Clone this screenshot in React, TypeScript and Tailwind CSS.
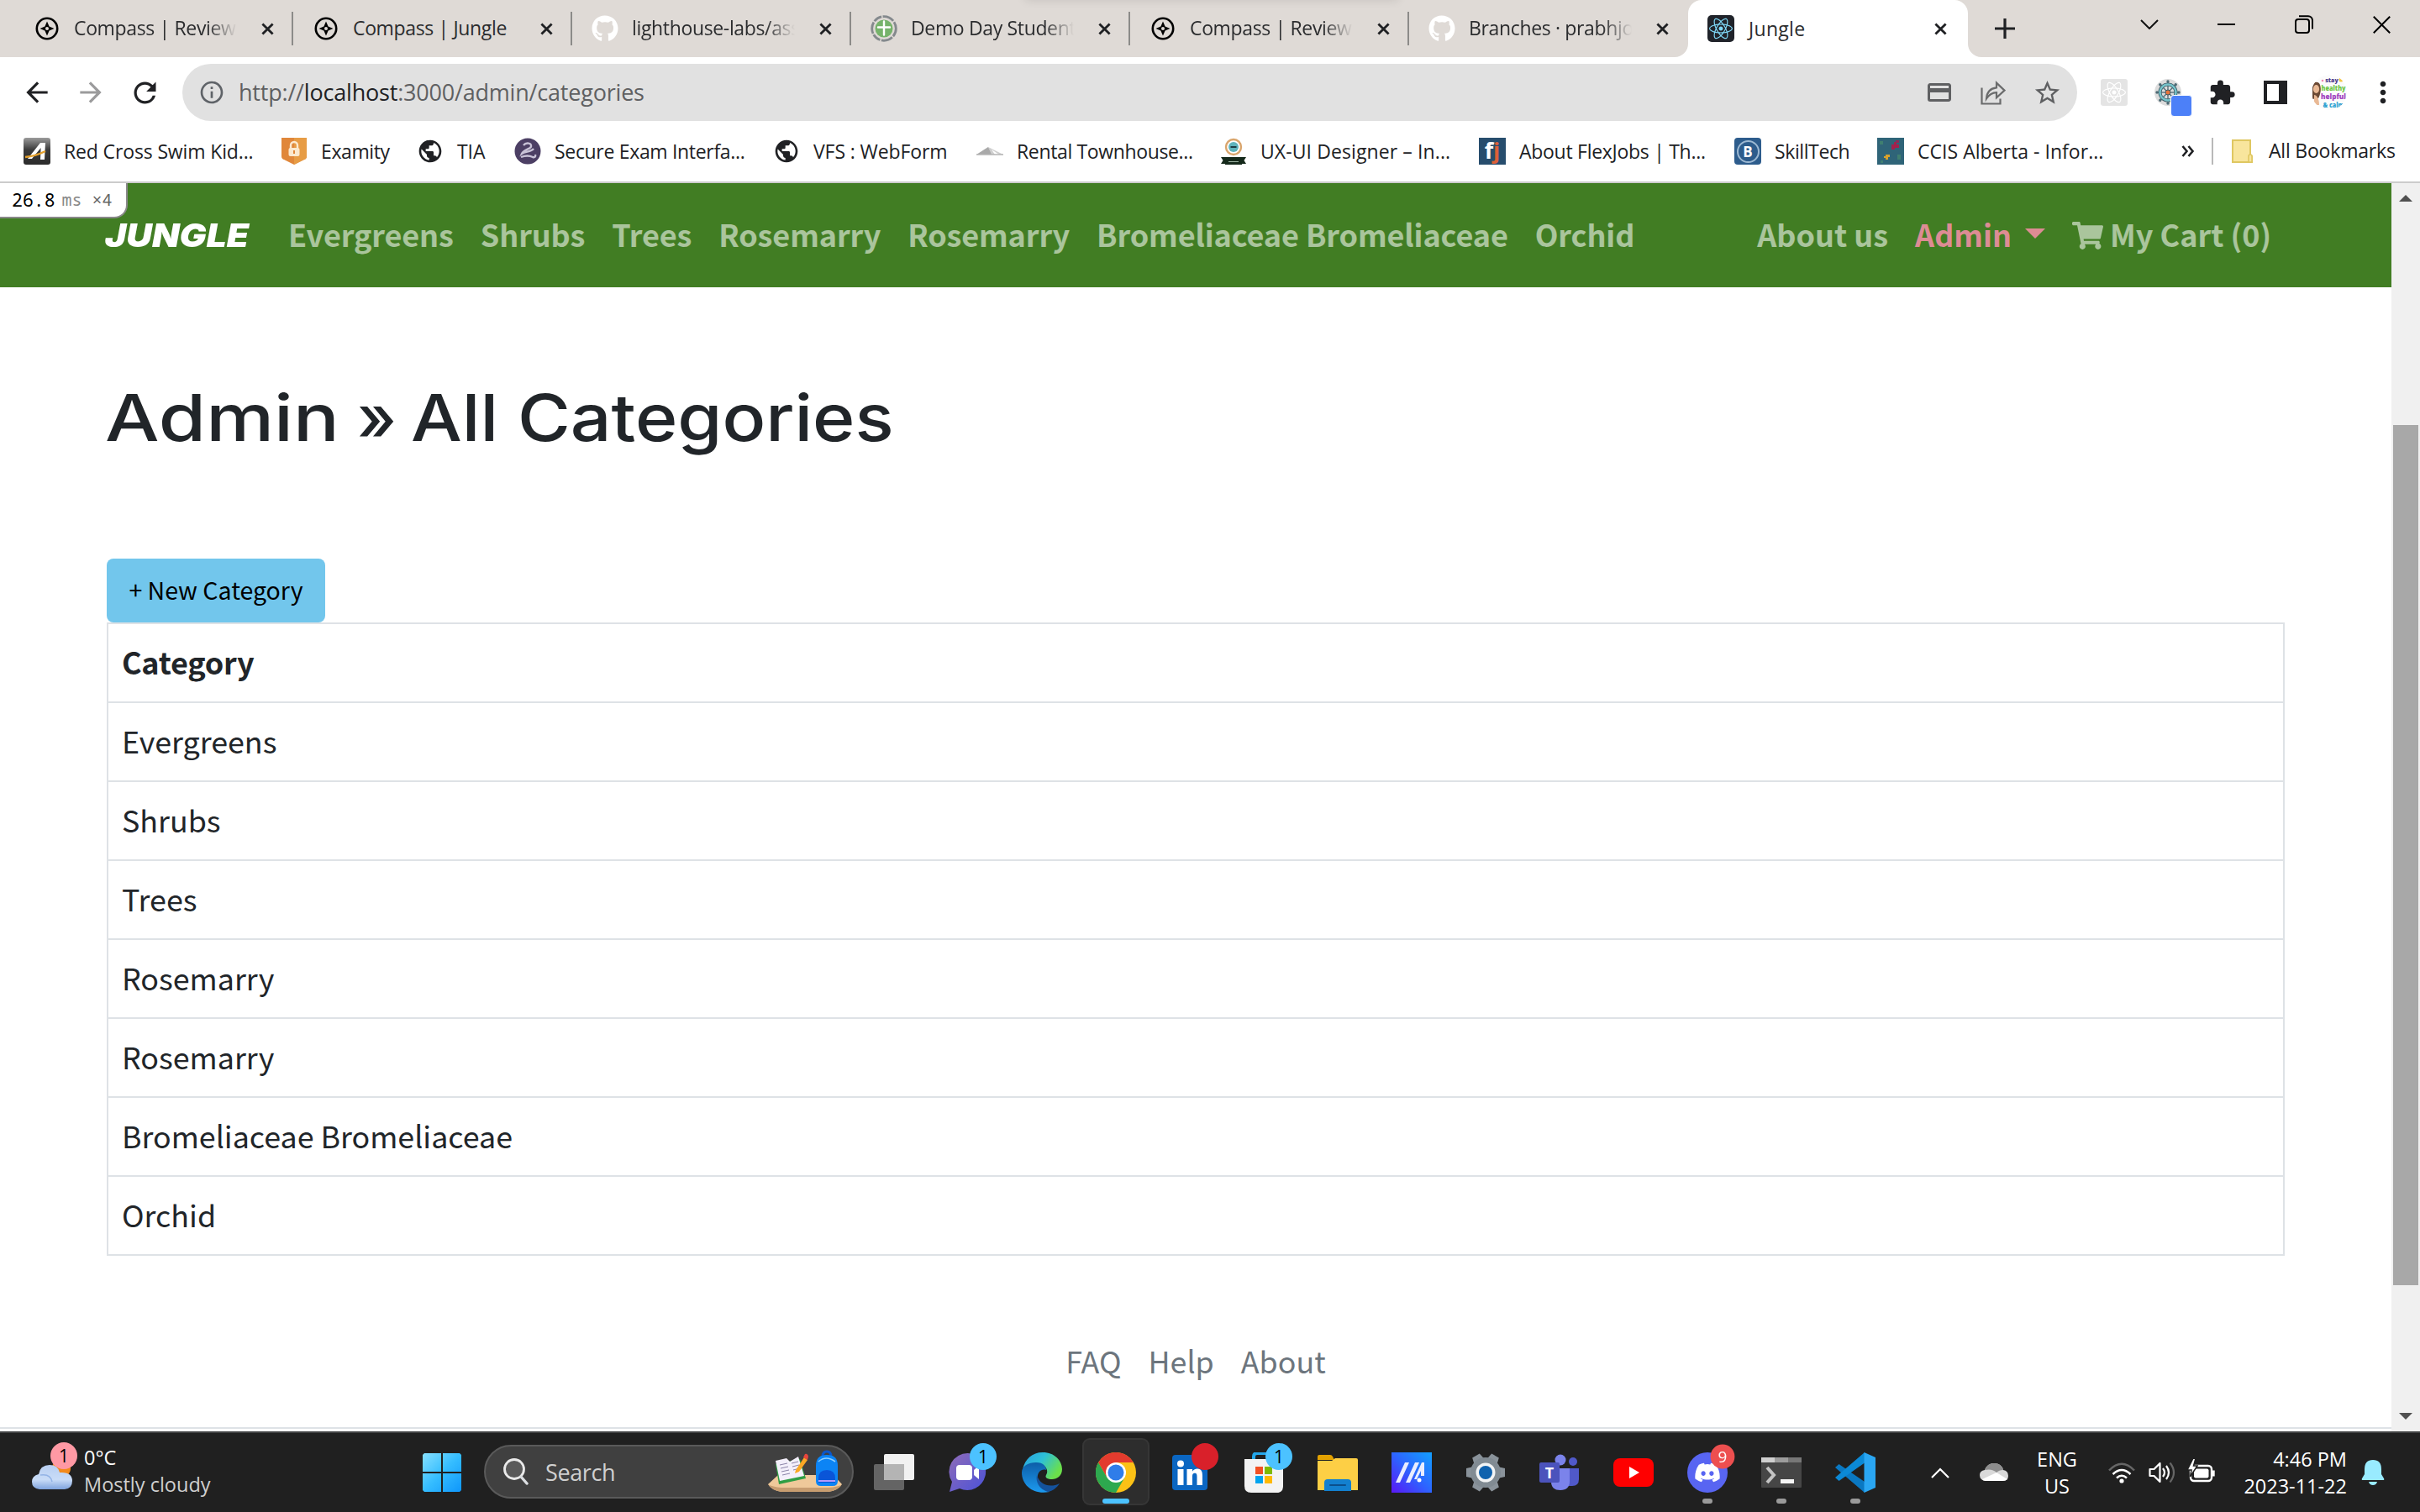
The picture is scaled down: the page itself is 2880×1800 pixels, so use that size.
import type { ReactNode } from 'react';
import { FaReact, FaGithub, FaShoppingCart, FaDiscord } from 'react-icons/fa';
import { MdArrowBack, MdArrowForward, MdRefresh, MdInfoOutline, MdStarBorder, MdExtension, MdMoreVert, MdPublic } from 'react-icons/md';

/* ---------- small shared drawings ---------- */

function Cross({ size = 15, stroke = 3 }: { size?: number; stroke?: number }) {
  return (
    <svg width={size} height={size} viewBox="0 0 16 16" className="shrink-0">
      <path d="M1.5 1.5l13 13M14.5 1.5l-13 13" stroke="#202124" strokeWidth={stroke} />
    </svg>
  );
}

function CompassIcon() {
  return (
    <svg width="28" height="28" viewBox="0 0 28 28">
      <circle cx="14" cy="14" r="12.2" fill="none" stroke="#000" strokeWidth="2.6" />
      <path d="M14 5.500l2.600 5.900 5.900 2.600-5.900 2.600L14 22.500l-2.600-5.900L5.500 14l5.900-2.600z" fill="#000" />
      <circle cx="14" cy="14" r="2" fill="#dfdad6" />
    </svg>
  );
}

function DemoDayIcon() {
  return (
    <svg width="32" height="32" viewBox="0 0 32 32">
      <circle cx="16" cy="16" r="14.300" fill="none" stroke="#84898d" strokeWidth="2.800" strokeDasharray="10 1.500 14 1.500" />
      <circle cx="16" cy="16" r="10.500" fill="#76b36b" />
      <path d="M16 7.500v16M9 14.500h14" stroke="#fff" strokeWidth="2.400" strokeLinecap="round" />
    </svg>
  );
}

function ReactTile({ faded }: { faded?: boolean }) {
  return (
    <div className={faded ? 'flex size-8 items-center justify-center rounded-[3px] bg-[#e4e4e4]' : 'flex size-8 items-center justify-center rounded-[5px] bg-[#20232a]'}>
      <FaReact className={faded ? 'size-7 text-white' : 'size-7 text-[#7fd8f7]'} />
    </div>
  );
}

/* ---------- tab strip ---------- */

const tabs: { title: string; icon: ReactNode }[] = [
  { title: 'Compass | Review A', icon: <CompassIcon /> },
  { title: 'Compass | Jungle', icon: <CompassIcon /> },
  { title: 'lighthouse-labs/assi', icon: <FaGithub className="size-8 text-white" /> },
  { title: 'Demo Day Students', icon: <DemoDayIcon /> },
  { title: 'Compass | Review A', icon: <CompassIcon /> },
  { title: 'Branches · prabhjot', icon: <FaGithub className="size-8 text-white" /> },
];

function TabStrip() {
  return (
    <div className="relative flex h-[68px] shrink-0 bg-[#dfdad6] pl-[17px] text-[23px] text-[#2b2c2e]">
      <div className="absolute left-[1220px] top-[-12px] h-2.5 w-[444px] shadow-[0_2px_12px_rgba(0,0,0,0.12)]" />
      {tabs.map((t, i) => (
        <div key={i} className="flex w-[332px] shrink-0 items-center">
          <div className="ml-[23px] flex size-8 shrink-0 items-center justify-center">{t.icon}</div>
          <div
            className={
              t.title === 'Compass | Jungle'
                ? 'ml-4 h-10 w-[194px] whitespace-nowrap leading-[38px] tracking-[-0.35px]'
                : 'ml-4 h-10 w-[194px] overflow-hidden whitespace-nowrap leading-[38px] tracking-[-0.35px] [mask-image:linear-gradient(to_right,black_82%,transparent_100%)]'
            }
          >
            {t.title}
          </div>
          <div className="ml-[29px] flex grow items-center justify-between">
            <Cross />
            {i < 5 && <div className="h-10 w-0.5 bg-[#8c8b89]" />}
          </div>
        </div>
      ))}
      <div className="relative flex w-[333px] shrink-0 items-center rounded-t-[16px] bg-white">
        <svg className="absolute bottom-0 left-[-16px]" width="16" height="16" viewBox="0 0 16 16"><path d="M16 0v16H0A16 16 0 0 0 16 0z" fill="#fff" /></svg>
        <svg className="absolute bottom-0 right-[-16px]" width="16" height="16" viewBox="0 0 16 16"><path d="M0 0v16h16A16 16 0 0 1 0 0z" fill="#fff" /></svg>
        <div className="ml-[23px]"><ReactTile /></div>
        <div className="ml-[17px] w-[221px] leading-[38px] tracking-[0.3px]">Jungle</div>
        <Cross />
      </div>
      <div className="ml-[32px] flex items-center">
        <svg width="24" height="24" viewBox="0 0 24 24"><path d="M12 0v24M0 12h24" stroke="#202124" strokeWidth="3.200" /></svg>
      </div>
      <div className="ml-auto flex h-[58px] items-center">
        <svg width="22" height="12" viewBox="0 0 22 12" className="mr-[70px]"><path d="M1 1l10 10L21 1" fill="none" stroke="#111" strokeWidth="2" /></svg>
        <div className="mr-[71px] h-0.5 w-[21px] bg-black" />
        <svg width="22" height="22" viewBox="0 0 22 22" className="mr-[71px]">
          <rect x="1" y="5" width="16" height="16" rx="3" fill="none" stroke="#000" strokeWidth="2" />
          <path d="M5 1.200h11a5 5 0 0 1 5 5V16.500" fill="none" stroke="#000" strokeWidth="2" />
        </svg>
        <svg width="21" height="21" viewBox="0 0 21 21" className="mr-[35px]"><path d="M.8.8l19.400 19.400M20.200.8L.8 20.200" stroke="#000" strokeWidth="2" /></svg>
      </div>
    </div>
  );
}

/* ---------- address bar ---------- */

function Cell({ children }: { children: ReactNode }) {
  return <div className="relative flex h-16 w-16 shrink-0 items-center justify-center">{children}</div>;
}

function WheelIcon() {
  const angles = [0, 45, 90, 135, 180, 225, 270, 315];
  return (
    <svg width="32" height="32" viewBox="0 0 32 32">
      <circle cx="16" cy="16" r="16" fill="#dcdcdc" />
      {angles.map((a) => (
        <g key={a} transform={`rotate(${a} 16 16)`}>
          <path d="M16 16V4" stroke="#4d6a74" strokeWidth="1.300" />
          <circle cx="16" cy="3" r="1.700" fill="#4d6a74" />
        </g>
      ))}
      <circle cx="16" cy="16" r="9.500" fill="none" stroke="#3f5c66" strokeWidth="4" />
      <circle cx="16" cy="16" r="9.500" fill="none" stroke="#76c3ca" strokeWidth="2.400" />
      <circle cx="16" cy="16" r="3" fill="#e8743b" stroke="#3f5c66" />
    </svg>
  );
}

function ProfilePicture() {
  return (
    <svg width="42" height="42" viewBox="0 0 42 42" className="rounded-full">
      <circle cx="21" cy="21" r="21" fill="#fbfbfb" />
      <path d="M1 14c1-6 7-7 9-2 2 6 0 12-2 16l-7 1z" fill="#6b4a35" />
      <ellipse cx="5.500" cy="17" rx="3.600" ry="5" fill="#e9b995" />
      <path d="M3 24c3 0 6 4 6 12H3z" fill="#e9b995" />
      <circle cx="35" cy="6" r="2.500" fill="#f4c542" />
      <circle cx="13" cy="7" r="1.300" fill="#f08ab0" />
      <g fontFamily="Open Sans, sans-serif" fontWeight="800" textAnchor="middle">
        <text x="24" y="9" fontSize="7" fill="#4a3a8a">stay</text>
        <text x="26" y="19" fontSize="9" textLength="29" lengthAdjust="spacingAndGlyphs" fill="#6cc644">healthy</text>
        <text x="26" y="29" fontSize="9" textLength="30" lengthAdjust="spacingAndGlyphs" fill="#a044c0">helpful</text>
        <text x="26" y="39" fontSize="9" textLength="25" lengthAdjust="spacingAndGlyphs" fill="#2a9fd0">&amp; calm</text>
      </g>
    </svg>
  );
}

function AddressBar() {
  return (
    <div className="flex h-[84px] shrink-0 items-center bg-white">
      <div className="ml-[25px] flex w-[192px] items-center">
        <MdArrowBack className="size-[38px] text-[#202124]" />
        <MdArrowForward className="ml-[26px] size-[38px] text-[#9b9b9c]" />
        <MdRefresh className="ml-[26px] size-[39px] text-[#202124]" />
      </div>
      <div className="flex h-[68px] w-[2255px] items-center rounded-full bg-[#e1e1e1] pl-[19px] pr-1">
        <MdInfoOutline className="size-[32px] text-[#5f6368]" />
        <div className="ml-[16px] text-[27px] tracking-[-0.2px] text-[#5f6062]">http://<span className="text-[#202124]">localhost</span>:3000/admin/categories</div>
        <div className="ml-auto flex">
          <Cell>
            <svg width="28" height="22" viewBox="0 0 28 22"><path d="M3 1.500h22a1.500 1.500 0 0 1 1.500 1.500v16a1.500 1.500 0 0 1-1.500 1.500H3A1.500 1.500 0 0 1 1.500 19V3A1.500 1.500 0 0 1 3 1.500z" fill="none" stroke="#5f6062" strokeWidth="3" /><path d="M1 8.500h26" stroke="#5f6062" strokeWidth="5" /></svg>
          </Cell>
          <Cell>
            <svg width="30" height="29" viewBox="0 0 30 29" fill="none" stroke="#6a6b6c" strokeWidth="2.200"><path d="M1.500 8.500v19h22v-6" /><path d="M7 21.500c.5-8 5-12.500 12-13.200V2.600l9.500 9-9.500 8.600v-6C14 14.200 10 17 7 21.500z" /></svg>
          </Cell>
          <Cell><MdStarBorder className="size-[35px] text-[#5f6062]" /></Cell>
        </div>
      </div>
      <div className="ml-3 flex">
        <Cell><ReactTile faded /></Cell>
        <Cell>
          <WheelIcon />
          <div className="absolute left-[35px] top-[35px] size-[26px] rounded-[4px] border border-white bg-[#4c80f8]" />
        </Cell>
        <Cell><MdExtension className="size-[33px] text-[#202124]" /></Cell>
        <Cell><div className="h-7 w-7 border-y-4 border-l-4 border-r-[10px] border-[#202124] bg-white" /></Cell>
        <Cell><ProfilePicture /></Cell>
        <Cell><MdMoreVert className="size-[40px] text-[#202124]" /></Cell>
      </div>
    </div>
  );
}

/* ---------- bookmarks bar ---------- */

const Globe = <MdPublic className="size-[34px] text-[#202124]" />;

const bookmarks: { label: string; width: string; track: string; icon: ReactNode }[] = [
  {
    label: 'Red Cross Swim Kid...', width: 'w-[306px]', track: 'tracking-[-0.14px]',
    icon: <svg width="32" height="32" viewBox="0 0 32 32"><defs><linearGradient id="rc" x1="0" y1="0" x2="0" y2="1"><stop offset="0" stopColor="#9b9b9b" /><stop offset=".45" stopColor="#3b3b3b" /><stop offset="1" stopColor="#2b2b2b" /></linearGradient></defs><rect width="32" height="32" rx="3" fill="url(#rc)" /><path d="M5 25L20 6h6l-1 20h-5l.6-14L10 25z" fill="#fff" /><path d="M2 23q12-1 24-7" stroke="#e5a12d" strokeWidth="2.500" fill="none" /></svg>,
  },
  {
    label: 'Examity', width: 'w-[162px]', track: 'tracking-[-0.4px]',
    icon: <svg width="32" height="32" viewBox="0 0 32 32"><path d="M1 0h30v22q0 3-3 4L16 32 4 26q-3-1-3-4z" fill="#e0873a" /><path d="M16 0h15v22q0 3-3 4L16 32z" fill="#e79c45" /><rect x="9.500" y="12" width="13" height="10" rx="2" fill="#fbe9cf" /><path d="M12 12V9a4 4 0 0 1 8 0v3" fill="none" stroke="#fbe9cf" strokeWidth="2.400" /><rect x="15" y="15" width="2" height="4" fill="#e0873a" /></svg>,
  },
  { label: 'TIA', width: 'w-[116px]', track: 'tracking-[-0.1px]', icon: Globe },
  {
    label: 'Secure Exam Interfa...', width: 'w-[308px]', track: 'tracking-[-0.32px]',
    icon: <svg width="32" height="32" viewBox="0 0 32 32"><circle cx="16" cy="16" r="15.500" fill="#4c3f64" /><path d="M11 9c3-4 10-3 9 1.500-.6 3-9 3.500-11 8.500 4-3 11-2 14-6M8 23q8-3 14 0 4 1 3-3" fill="none" stroke="#c8c2d6" strokeWidth="2.400" /></svg>,
  },
  { label: 'VFS : WebForm', width: 'w-[242px]', track: 'tracking-[-0.1px]', icon: Globe },
  {
    label: 'Rental Townhouse...', width: 'w-[290px]', track: 'tracking-[-0.36px]',
    icon: <svg width="32" height="32" viewBox="0 0 32 32"><path d="M0 20L14 11l6 9z" fill="#a9a9a9" /><path d="M14 11l18 9h-5l-9-6 4 6h-4z" fill="#cfcfcf" /><path d="M0 20h32" stroke="#b5b5b5" strokeWidth="1.500" /></svg>,
  },
  {
    label: 'UX-UI Designer – In...', width: 'w-[308px]', track: 'tracking-[0.1px]',
    icon: <svg width="32" height="32" viewBox="0 0 32 32"><circle cx="16" cy="11" r="9" fill="none" stroke="#d9a56c" strokeWidth="2.400" /><circle cx="16" cy="11" r="6" fill="#5fb4bd" /><path d="M12.500 11h7" stroke="#1d3c44" strokeWidth="2" /><path d="M1 23h30l-2.500 4 2.500 4h-5v1H6v-1H1l2.500-4z" fill="#15291b" /><path d="M10 28.500h12" stroke="#9fb5a5" strokeWidth="1" /></svg>,
  },
  {
    label: 'About FlexJobs | Th...', width: 'w-[304px]', track: 'tracking-[-0.28px]',
    icon: <div className="flex size-8 items-center justify-center bg-[#274d6d] pb-1 text-[27px] font-bold leading-none text-white">f<span className="text-[#dd6038]">j</span></div>,
  },
  {
    label: 'SkillTech', width: 'w-[170px]', track: 'tracking-[-0.4px]',
    icon: <div className="flex size-8 items-center justify-center rounded-[4px] bg-[#2d5c8c]"><div className="flex size-[27px] items-center justify-center rounded-full border-2 border-[#9db9d3] text-[17px] font-bold leading-none text-white">B</div></div>,
  },
  {
    label: 'CCIS Alberta - Infor...', width: 'w-[270px]', track: 'tracking-[0.03px]',
    icon: <svg width="32" height="32" viewBox="0 0 32 32"><rect width="32" height="32" fill="#2f6478" /><path d="M17 8h3v-3h3v3h3v4h-5v2h-4z" fill="#a3214c" /><path d="M22 3h4v3h-4z" fill="#8c2b57" /><path d="M10 20h5v3h-2v3h-3v-2H8v-2h2z" fill="#d8a12c" /><path d="M3 4h4v4H3zM24 20h4v6h-4zM4 27h3v3H4z" fill="#3f7f70" /></svg>,
  },
];

function BookmarksBar() {
  return (
    <div className="flex h-[66px] shrink-0 items-center border-b-2 border-[#cccccc] bg-white pb-[8px] pl-[28px] text-[23px] text-[#202124]">
      {bookmarks.map((b) => (
        <div key={b.label} className={`flex shrink-0 items-center ${b.width}`}>
          <div className="flex size-8 shrink-0 items-center justify-center">{b.icon}</div>
          <div className={`ml-4 whitespace-nowrap pb-px leading-8 ${b.track}`}>{b.label}</div>
        </div>
      ))}
      <svg width="16" height="14" viewBox="0 0 16 14" className="ml-[92px]"><path d="M1.500 1l5 6-5 6M8.500 1l5 6-5 6" fill="none" stroke="#202124" strokeWidth="2.600" /></svg>
      <div className="ml-[20px] h-8 w-0.5 bg-[#b9b9b9]" />
      <svg width="25" height="28" viewBox="0 0 25 28" className="ml-[22px]"><path d="M1 1h21v18l2 1v7H1z" fill="#f8e59d" stroke="#dfc761" strokeWidth="2" /><path d="M20 27v-7q0-2 2-2t2 2v7z" fill="#f8e59d" stroke="#dfc761" strokeWidth="1.600" /></svg>
      <div className="ml-[19px] whitespace-nowrap pb-px tracking-[-0.2px]">All Bookmarks</div>
    </div>
  );
}

/* ---------- page ---------- */

const categories = ['Evergreens', 'Shrubs', 'Trees', 'Rosemarry', 'Rosemarry', 'Bromeliaceae Bromeliaceae', 'Orchid'];

function Page() {
  return (
    <div className="relative flex h-[1486px] w-[2846px] flex-col bg-white font-['Noto_Sans_CJK_SC',sans-serif] text-[35.800px] text-[#212529]">
      <div className="absolute left-0 top-0 flex h-[42px] w-[152px] items-center rounded-br-[16px] border-b-2 border-r-2 border-[#888] bg-white pl-[14px] font-['Noto_Sans_Mono',monospace] text-[21.500px] leading-none text-[#888]">
        <span className="text-black">26.8</span>
        <span className="ml-[8px] text-[20px]">ms</span>
        <span className="ml-[12px] text-[20px] text-[#666]">×4</span>
      </div>
      <nav className="flex h-[124px] shrink-0 items-start bg-[#417d23] px-[127px] pt-[34px] text-[36px] font-bold leading-[52px] text-white/55">
        <div className="w-[216px]">
          <span className="-ml-[2px] inline-block origin-left scale-x-[1.117] font-[Inter] text-[38px] font-black italic text-white">JUNGLE</span>
        </div>
        <div className="flex gap-8 whitespace-nowrap tracking-[-0.1px]">
          {categories.map((c, i) => <span key={i}>{c}</span>)}
        </div>
        <div className="ml-auto mr-4 flex whitespace-nowrap">
          <span>About us</span>
          <span className="ml-8 text-[#dd8c94]">Admin</span>
          <div className="ml-[16px] mt-[20px] h-0 w-0 border-x-[12px] border-t-[12px] border-x-transparent border-t-[#dd8c94]" />
          <FaShoppingCart className="ml-[32px] mt-[10px] size-[37px]" />
          <span className="ml-[8px]">My Cart (0)</span>
        </div>
      </nav>
      <main className="flex h-[1357px] flex-col px-[127px]">
        <h1 className="mt-[105px] flex h-[100px] whitespace-nowrap font-[Inter] text-[77px] font-medium leading-[100px]">
          <span className="-ml-[2px] w-[300px] origin-left scale-x-[1.183]">Admin</span>
          <span className="w-[64px]">»</span>
          <span className="inline-block origin-left scale-x-[1.114]">All Categories</span>
        </h1>
        <button className="mt-[118px] h-[76px] w-[260px] shrink-0 whitespace-nowrap rounded-[8px] bg-[#72c6ec] pb-[3px] text-[28.500px] leading-[60px] text-black">+ New Category</button>
        <div className="flex shrink-0 flex-col border-2 border-b-0 border-[#dee2e6] leading-[60px]">
          <div className="h-[94px] border-b-2 border-[#dee2e6] px-4 pt-[14px] text-[36px] font-bold tracking-[-0.25px]">Category</div>
          {categories.map((c, i) => (
            <div key={i} className="h-[94px] border-b-2 border-[#dee2e6] px-4 pt-[14px]">{c}</div>
          ))}
        </div>
        <footer className="mt-[94px] flex justify-center gap-8 leading-[60px] text-[#6c757d]">
          <span>FAQ</span>
          <span>Help</span>
          <span>About</span>
        </footer>
      </main>
      <div className="mt-auto mb-[3px] h-0.5 bg-[#dee2e6]" />
    </div>
  );
}

function Scrollbar() {
  return (
    <div className="flex w-[34px] flex-col items-center bg-[#f0f0f0]">
      <div className="mt-[14px] h-0 w-0 border-x-8 border-b-8 border-x-transparent border-b-[#505050]" />
      <div className="mt-[266px] h-[1024px] w-[30px] bg-[#a8a8a8]" />
      <div className="mt-[152px] h-0 w-0 border-x-8 border-t-8 border-x-transparent border-t-[#505050]" />
    </div>
  );
}

/* ---------- taskbar icons ---------- */

function CloudIcon() {
  return (
    <svg width="48" height="36" viewBox="0 0 48 36">
      <defs><linearGradient id="cl" x1="0" y1="0" x2="0" y2="1"><stop offset="0" stopColor="#b8cff2" /><stop offset=".6" stopColor="#c9dcf7" /><stop offset="1" stopColor="#7ea3dd" /></linearGradient></defs>
      <circle cx="35" cy="9" r="11" fill="#f28a1c" />
      <path d="M9 34q-9-1-9-9 0-7 8-9 2-11 13-11 10 0 12 9 15-1 15 10 0 9-9 10z" fill="url(#cl)" />
      <path d="M10 17q12-2 14 8" fill="none" stroke="#93b3e6" strokeWidth="1.500" />
    </svg>
  );
}

function SearchArt() {
  return (
    <svg width="92" height="52" viewBox="0 0 92 52">
      <path d="M2 41L14 30h66l10 11q-4 7-16 9H18Q6 48 2 41z" fill="#efc99a" />
      <path d="M2 41q5 3 16 4h56q12-1 16-4-4 7-16 9H18Q6 48 2 41z" fill="#c79d70" />
      <path d="M11 17l29-6 7 23-32 7z" fill="#2f9e44" />
      <path d="M11 13l13-3 4 4 10-6 7 23-29 6z" fill="#f3effa" />
      <path d="M16 18l9-2M17 22l9-2M18 26l9-2M19 30l9-2M30 16l8-2M31 20l8-2M32 24l8-2" stroke="#8b84a8" strokeWidth="1" />
      <path d="M35 24L45 9l4 3-10 14-5 2z" fill="#f9a825" /><path d="M44 9l2-4q3-1 4 3l-1 4z" fill="#e8453c" />
      <path d="M67 8q0-6 5-6t5 6" fill="none" stroke="#0b56c9" strokeWidth="3" />
      <path d="M59 19q0-13 13-13t13 13v18q0 6-6 6H65q-6 0-6-6z" fill="#0c84f5" />
      <path d="M62 34q0-10 10-10t10 10v5H62z" fill="#0a55d8" /><path d="M62 37h20" stroke="#b39bff" strokeWidth="2" /><path d="M62 14q9-8 20 0" fill="none" stroke="#8fd0ff" strokeWidth="1.600" />
    </svg>
  );
}

function TaskViewIcon() {
  return <svg width="48" height="46" viewBox="0 0 48 46"><rect x="12" y="1" width="36" height="31" rx="2" fill="#f1f1f1" /><rect x="0" y="13" width="36" height="31" rx="2" fill="#6b6b6b" opacity=".9" /><rect x="12" y="13" width="24" height="19" fill="#b4b4b4" /></svg>;
}
function ChatIcon() {
  return (
    <svg width="46" height="48" viewBox="0 0 46 48"><defs><linearGradient id="ch" x1="0" y1="0" x2="1" y2="1"><stop offset="0" stopColor="#8f6bb8" /><stop offset="1" stopColor="#4a52d8" /></linearGradient></defs>
      <path d="M23 1a22 22 0 1 1-10 42L1 47l3-12A22 22 0 0 1 23 1z" fill="url(#ch)" /><rect x="9" y="15" width="19" height="18" rx="4" fill="#fff" /><path d="M30 21l6-5v16l-6-5z" fill="#fff" /></svg>
  );
}
function EdgeIcon() {
  return (
    <svg width="48" height="48" viewBox="0 0 48 48">
      <defs>
        <linearGradient id="eg1" x1="0" y1="0" x2="1" y2=".5"><stop offset="0" stopColor="#2a9fe0" /><stop offset=".5" stopColor="#2dc0d8" /><stop offset="1" stopColor="#6be04a" /></linearGradient>
        <linearGradient id="eg2" x1="0" y1="0" x2="0" y2="1"><stop offset="0" stopColor="#0d5ea8" /><stop offset="1" stopColor="#1c9af0" /></linearGradient>
      </defs>
      <path d="M1 20C4 8 12 0 25 0c14 0 23 10 23 20 0 8-6 12-12 12-5 0-9-2-7-5 4-6-2-14-11-14C10 13 3 16 1 20z" fill="url(#eg1)" />
      <path d="M0 24c0-8 8-12 17-12 9 0 12 5 12 9-6-2-11 3-10 10 1 8 8 13 14 16C15 51 0 40 0 24z" fill="url(#eg2)" />
      <path d="M18 27c-2 8 3 17 13 20 6-1 11-5 14-10-12 6-24 1-27-10z" fill="#14529c" />
    </svg>
  );
}
function ChromeIcon() {
  return (
    <svg width="48" height="48" viewBox="0 0 48 48">
      <circle cx="24" cy="24" r="24" fill="#fbc116" />
      <path d="M3.200 12L13.600 30H34.400L24 48A24 24 0 0 1 3.200 12z" fill="#2da94f" />
      <path d="M3.200 12A24 24 0 0 1 44.800 12H24L13.600 30z" fill="#e33b2e" />
      <circle cx="24" cy="24" r="12" fill="#fff" /><circle cx="24" cy="24" r="9.500" fill="#2f7de9" />
    </svg>
  );
}
function LinkedInIcon() {
  return <svg width="42" height="42" viewBox="0 0 42 42"><rect width="42" height="42" rx="4" fill="#0a66c2" /><circle cx="10" cy="10.500" r="4" fill="#fff" /><path d="M6.500 17h7v19h-7zM17.500 17H24v2.700c1-1.800 3.200-3.200 6-3.200 5 0 6 3.600 6 8.500v11h-6.500v-9.800c0-2.300-.2-4.400-2.700-4.400S24 24 24 26v10h-6.500z" fill="#fff" /></svg>;
}
function StoreIcon() {
  return <svg width="46" height="48" viewBox="0 0 46 48"><path d="M11 14V5q0-4 4-4h16q4 0 4 4v9" fill="none" stroke="#24a7ea" strokeWidth="4" /><path d="M0 8h46v32q0 8-8 8H8q-8 0-8-8z" fill="#f3f3f3" /><path d="M13 17h9v9h-9z" fill="#f25022" /><path d="M24 17h9v9h-9z" fill="#7fba00" /><path d="M13 28h9v9h-9z" fill="#00a4ef" /><path d="M24 28h9v9h-9z" fill="#ffb900" /></svg>;
}
function FolderIcon() {
  return <svg width="48" height="44" viewBox="0 0 48 44"><path d="M0 3q0-2 2-2h13q2 0 3 2l2 4H0z" fill="#e2a100" /><path d="M0 8h17l4-3h25q2 0 2 2v36H0z" fill="#fdcf45" /><path d="M8 44V34q0-4 4-4h24q4 0 4 4v10z" fill="#1380cf" /><path d="M15 37h18" stroke="#0b4f8c" strokeWidth="2" strokeLinecap="round" /></svg>;
}
function AsusIcon() {
  return <svg width="48" height="48" viewBox="0 0 48 48"><defs><linearGradient id="as" x1="0" y1="1" x2="1" y2="0"><stop offset="0" stopColor="#5a18f5" /><stop offset=".5" stopColor="#2d64ff" /><stop offset="1" stopColor="#12a0ff" /></linearGradient></defs><rect width="48" height="48" fill="url(#as)" /><path d="M5 36l11-24h5L10 36zM17 36l11-24h5L22 36zM27 32l9-20h3v16h-4v-6l-5 10z" fill="#e9edff" /><circle cx="33" cy="33" r="2.500" fill="#fff" /></svg>;
}
function SettingsIcon() {
  return (
    <svg width="48" height="48" viewBox="0 0 48 48">
      {[0, 60, 120, 180, 240, 300].map((a) => <path key={a} transform={`rotate(${a + 30} 24 24)`} d="M17 10l2-9h10l2 9z" fill="#8a939b" />)}
      <circle cx="24" cy="24" r="18" fill="#818b93" /><circle cx="24" cy="24" r="11.500" fill="#f2f4f5" /><circle cx="24" cy="24" r="8" fill="#0f62ae" />
    </svg>
  );
}
function TeamsIcon() {
  return (
    <div className="relative">
      <svg width="48" height="44" viewBox="0 0 48 44"><circle cx="25" cy="7" r="6.500" fill="#7b83eb" /><circle cx="40" cy="9" r="5" fill="#5059c9" /><path d="M32 17h15v13q0 8-8 8h-5z" fill="#5059c9" /><path d="M14 17h22v15q0 11-11 11T14 33z" fill="#7b83eb" /><rect y="10" width="24" height="24" rx="2" fill="#4b53bc" /></svg>
      <div className="absolute left-0 top-[10px] w-6 text-center text-[18px] font-bold leading-6 text-white">T</div>
    </div>
  );
}
function YouTubeIcon() {
  return <svg width="48" height="34" viewBox="0 0 48 34"><rect width="48" height="34" rx="8" fill="#f00" /><path d="M19 10l12 7-12 7z" fill="#fff" /></svg>;
}
function TerminalIcon() {
  return <svg width="48" height="36" viewBox="0 0 48 36"><rect width="48" height="36" rx="1" fill="#464646" /><path d="M0 0h16v6H0z" fill="#cfcfcf" /><path d="M16 0h16v6H16z" fill="#9c9c9c" /><path d="M32 0h16v6H32z" fill="#777" /><path d="M7 12l8 9-8 9" fill="none" stroke="#c4c4c4" strokeWidth="4" /><path d="M23 28.500h16" stroke="#f5f5f5" strokeWidth="5" /></svg>;
}
function CodeIcon() {
  return <svg width="48" height="48" viewBox="0 0 48 48"><path d="M0 18l4.500-4L35 35v13z" fill="#0a78c2" /><path d="M0 30l4.500 4L35 12.500V0z" fill="#0b89d6" /><path d="M34.500 0L48 6v36l-13.500 6z" fill="#2aa6f2" /></svg>;
}

function Badge({ children, tone = 'bg-[#4cc2ff] text-black' }: { children?: ReactNode; tone?: string }) {
  return <div className={`absolute flex size-8 items-center justify-center rounded-full text-[21px] leading-none ${tone}`}>{children}</div>;
}

const apps: { icon: ReactNode; badge?: ReactNode; active?: boolean; running?: boolean }[] = [
  { icon: <TaskViewIcon /> },
  { icon: <ChatIcon />, badge: <Badge>1</Badge> },
  { icon: <EdgeIcon /> },
  { icon: <ChromeIcon />, active: true },
  { icon: <LinkedInIcon />, badge: <Badge tone="bg-[#d9202a]" /> },
  { icon: <StoreIcon />, badge: <Badge>1</Badge> },
  { icon: <FolderIcon /> },
  { icon: <AsusIcon /> },
  { icon: <SettingsIcon /> },
  { icon: <TeamsIcon /> },
  { icon: <YouTubeIcon /> },
  {
    icon: <div className="flex size-12 items-center justify-center rounded-full bg-[#5865f2]"><FaDiscord className="size-8 text-white" /></div>,
    badge: <Badge tone="bg-[#ed4f4f] text-white scale-90">9</Badge>, running: true,
  },
  { icon: <TerminalIcon />, running: true },
  { icon: <CodeIcon />, running: true },
];

function Taskbar() {
  return (
    <div className="flex h-24 shrink-0 border-t-2 border-[#414243] bg-[#202020] text-[23.500px] text-white">
      <div className="flex w-[503px]">
        <div className="relative ml-[38px] mt-[33px] h-9 w-[48px]">
          <CloudIcon />
          <div className="absolute left-[22px] top-[-22px]"><Badge tone="bg-[#ff99a4] text-black">1</Badge></div>
        </div>
        <div className="ml-[14px] mt-[13px] leading-8">
          <div>0°C</div>
          <div className="text-[#cfcfcf]">Mostly cloudy</div>
        </div>
      </div>
      <svg width="46" height="46" viewBox="0 0 46 46" className="mt-[24px]">
        <defs><linearGradient id="wn" x1="0" y1="0" x2="1" y2="1"><stop offset="0" stopColor="#86e0ff" /><stop offset=".5" stopColor="#35bdff" /><stop offset="1" stopColor="#0e96fb" /></linearGradient></defs>
        <path d="M2 0h20v22H0V2zM24 0h20l2 2v20H24zM0 24h22v22H2l-2-2zM24 24h22v20l-2 2H24z" fill="url(#wn)" />
      </svg>
      <div className="ml-[27px] mt-[14px] flex h-16 w-[440px] items-center rounded-full border-2 border-[#5a5a5a] bg-[#404040] pl-[21px] text-[27px] text-[#d0d0d0]">
        <svg width="30" height="32" viewBox="0 0 30 32"><circle cx="13" cy="13" r="11.500" fill="#5a5a5a" stroke="#eaeaea" strokeWidth="2.800" /><path d="M21 22l7 8" stroke="#dcdfe2" strokeWidth="3.400" strokeLinecap="round" /></svg>
        <div className="ml-[20px] w-[263px] pt-0.5 tracking-[-0.4px]">Search</div>
        <SearchArt />
      </div>
      <div className="ml-1 flex">
        {apps.map((a, i) => (
          <div key={i} className="relative flex h-[94px] w-[88px] items-center justify-center">
            {a.active && <div className="absolute left-1 top-[6px] h-20 w-20 rounded-[9px] border-2 border-[#363636] bg-[#2d2d2d]" />}
            <div className="relative">{a.icon}</div>
            {a.badge && <div className="absolute left-[46px] top-[12px]">{a.badge}</div>}
            {a.active && <div className="absolute left-7 top-[78px] h-1.5 w-8 rounded-full bg-[#4cc2ff]" />}
            {a.running && <div className="absolute left-[38px] top-[78px] h-1.5 w-3 rounded-full bg-[#9a9a9a]" />}
          </div>
        ))}
      </div>
      <div className="ml-auto flex items-center">
        <svg width="22" height="13" viewBox="0 0 22 13"><path d="M1 12L11 2l10 10" fill="none" stroke="#fff" strokeWidth="2.200" /></svg>
        <svg width="34" height="22" viewBox="0 0 34 22" className="ml-[36px]"><path d="M7 21q-7-1-7-7 0-5 6-6Q9 0 17 0q9 0 11 8 6 1 6 7 0 6-7 6z" fill="#d9d9d9" /><path d="M6 8Q9 0 17 0q9 0 11 8-5 0-8 3-5-5-14-3z" fill="#8e8e8e" /><path d="M3 19l17-8 13 8q-2 2-6 2H7q-3 0-4-2z" fill="#fff" /></svg>
        <div className="ml-[33px] w-[50px] text-center leading-8">ENG<br />US</div>
        <svg width="32" height="25" viewBox="0 0 32 25" className="ml-[36px]" fill="none" strokeWidth="2.500"><path d="M1 9.500Q16-6 31 9.500" stroke="#666" /><path d="M5.500 14q10.500-10 21 0M10 18.500q6-5.500 12 0" stroke="#fff" /><circle cx="16" cy="22" r="2.600" fill="#fff" /></svg>
        <svg width="32" height="28" viewBox="0 0 32 28" className="ml-[16px]" fill="none" stroke="#fff" strokeWidth="2.200"><path d="M1.500 10h5l7-7v22l-7-7h-5z" strokeLinejoin="round" /><path d="M17 9q4 5 0 10M21 6q6 8 0 16" /><path d="M25.500 2.500q9 11.500 0 23" stroke="#666" /></svg>
        <svg width="33" height="28" viewBox="0 0 33 28" className="mb-1 ml-[15px]"><rect x="3" y="8" width="25" height="18" rx="4" fill="none" stroke="#fff" strokeWidth="2.400" /><rect x="7" y="11.500" width="17.500" height="11" rx="2" fill="#fff" /><path d="M30 13.500v7" stroke="#fff" strokeWidth="3.400" /><path d="M6-1L-1 13h5l-1.500 8L11 8H6.500L9-1z" fill="#fff" stroke="#202020" strokeWidth="1.500" /></svg>
        <div className="ml-[30px] w-[126px] whitespace-nowrap text-right leading-8">4:46 PM<br />2023-11-22</div>
        <svg width="28" height="30" viewBox="0 0 28 30" className="ml-[17px] mr-[42px]"><path d="M14 0q10 0 10 11v6l3 5q1 2-1 2H2q-2 0-1-2l3-5v-6Q4 0 14 0zM9 26h10q-1 4-5 4t-5-4z" fill="#99ebff" /></svg>
      </div>
    </div>
  );
}

export default function App() {
  return (
    <div className="flex h-[1800px] w-[2880px] flex-col overflow-hidden bg-white font-['Open_Sans',sans-serif]">
      <TabStrip />
      <AddressBar />
      <BookmarksBar />
      <div className="flex h-[1486px] shrink-0">
        <Page />
        <Scrollbar />
      </div>
      <Taskbar />
    </div>
  );
}
